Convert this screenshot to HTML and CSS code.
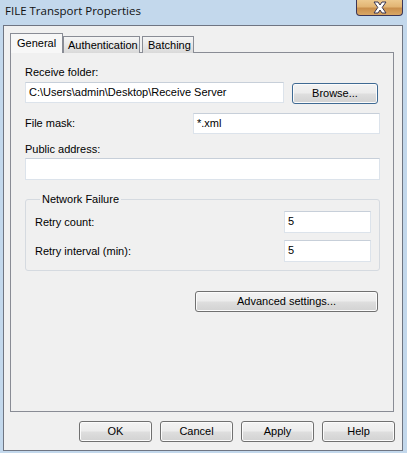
FILE: index.html
```html
<!DOCTYPE html>
<html>
<head>
<meta charset="utf-8">
<link rel="stylesheet" href="styles.css">
</head>
<body>
<div class="window">
  <div class="titlebar">
    <span class="title">FILE Transport Properties</span>
    <div class="close">
      <svg width="22" height="13" viewBox="0 0 22 13">
        <path d="M5 1 H9 L11 4 L13 1 H17 L13.2 6.5 L17 12 H13 L11 9 L9 12 H5 L8.8 6.5 Z" fill="#ffffff" stroke="#3a3550" stroke-width="1"/>
      </svg>
    </div>
  </div>
  <div class="client">
    <div class="tabs">
      <div class="tab active">General</div>
      <div class="tab auth">Authentication</div>
      <div class="tab batch">Batching</div>
    </div>
    <div class="panel">
      <div class="label first">Receive folder:</div>
      <div class="row folder">
        <div class="textbox path">C:\Users\admin\Desktop\Receive Server</div>
        <div class="btn browse">Browse...</div>
      </div>
      <div class="row mask-row">
        <span class="label">File mask:</span>
        <div class="textbox mask">*.xml</div>
      </div>
      <div class="label public-label">Public address:</div>
      <div class="textbox public"></div>
      <fieldset class="group">
        <legend>Network Failure</legend>
        <div class="row group-row">
          <span class="label">Retry count:</span>
          <div class="textbox num">5</div>
        </div>
        <div class="row group-row second">
          <span class="label">Retry interval (min):</span>
          <div class="textbox num">5</div>
        </div>
      </fieldset>
      <div class="row adv-row">
        <div class="btn advanced">Advanced settings...</div>
      </div>
    </div>
    <div class="footer">
      <div class="btn foot">OK</div>
      <div class="btn foot">Cancel</div>
      <div class="btn foot">Apply</div>
      <div class="btn foot">Help</div>
    </div>
  </div>
</div>
</body>
</html>
```
FILE: styles.css
```css
* { box-sizing: border-box; }
html, body { margin: 0; padding: 0; }
body {
  width: 407px;
  height: 453px;
  overflow: hidden;
  background: #c3d8ec;
  font-family: "Liberation Sans", Arial, sans-serif;
  font-size: 11px;
  color: #000;
}
.window {
  width: 407px;
  height: 453px;
  padding: 0 0 0 3px;
  background: #c3d8ec;
}
.titlebar {
  height: 25px;
  display: flex;
  justify-content: space-between;
  align-items: flex-start;
}
.title {
  font-family: "Open Sans", "Noto Sans", sans-serif;
  font-size: 11.5px;
  line-height: 16px;
  margin: 3px 0 0 2px;
  color: #111;
}
.close {
  width: 47px;
  height: 16px;
  margin-right: 4px;
  border: 1px solid #3b3556;
  border-top: none;
  border-radius: 0 0 4px 4px;
  background: linear-gradient(#ecc98f 0%, #e2b574 45%, #c98f4c 55%, #d9a766 100%);
  display: flex;
  align-items: center;
  justify-content: center;
}
.client {
  width: 400px;
  height: 426px;
  border: 1px solid #6f7582;
  background: #f0f0f0;
  padding: 7px 0 0 6px;
}
.tabs {
  display: flex;
  align-items: flex-end;
  height: 20px;
  position: relative;
  z-index: 1;
}
.tab {
  height: 17px;
  border: 1px solid #898c95;
  border-bottom: none;
  background: linear-gradient(#f5f5f5, #e8e8e8 50%, #d9d9d9);
  padding: 2px 0 0 4px;
  line-height: 13px;
  font-size: 11px;
}
.tab.active {
  height: 20px;
  width: 53px;
  background: #f7f7f7;
  padding: 3px 0 0 6px;
  border-right: 1px solid #898c95;
}
.tab.auth { width: 77px; }
.tab.batch { width: 52px; margin-left: 2px; padding-left: 5px; }
.panel {
  width: 384px;
  height: 360px;
  margin-top: -1px;
  border: 1px solid #898c95;
  background: #f0f0f0;
  padding: 13px 13px 0 14px;
}
.label {
  line-height: 13px;
  height: 13px;
  white-space: nowrap;
}
.row { display: flex; }
.textbox {
  height: 21px;
  background: #fff;
  border: 1px solid #dce3eb;
  border-top-color: #c7cfd9;
  padding: 3px 0 0 3px;
  line-height: 13px;
  white-space: nowrap;
  overflow: hidden;
}
.btn {
  height: 21px;
  border: 1px solid #707070;
  border-radius: 3px;
  background: linear-gradient(#f3f3f3 0%, #ececec 48%, #dedede 52%, #d2d2d2 100%);
  box-shadow: inset 0 0 0 1px #fbfbfb;
  display: flex;
  align-items: center;
  justify-content: center;
  line-height: 13px;
}
.folder { margin-top: 3px; height: 22px; align-items: flex-start; }
.path { width: 259px; }
.browse { width: 86px; margin-left: 8px; margin-top: 1px; border-color: #3f6a93; }
.mask-row {
  margin-top: 9px;
  align-items: center;
  justify-content: space-between;
}
.mask { width: 187px; }
.public-label { margin-top: 9px; }
.public { margin-top: 2px; width: 355px; height: 22px; }
.group {
  margin: 13px 0 0 0;
  width: 355px;
  border: 1px solid #d5dae0;
  border-radius: 3px;
  padding: 5px 8px 8px 9px;
  min-width: 0;
}
.group legend {
  padding: 0 2px;
  margin-left: 5px;
  line-height: 13px;
  font-size: 11px;
}
.group-row {
  align-items: center;
  justify-content: space-between;
}
.group-row.second { margin-top: 7px; }
.num { width: 87px; height: 22px; }
.adv-row { justify-content: flex-end; margin-top: 20px; padding-right: 2px; }
.advanced { width: 183px; }
.footer {
  display: flex;
  justify-content: flex-end;
  gap: 8px;
  margin-top: 9px;
  padding-right: 7px;
  width: 392px;
}
.foot { width: 73px; }
```
